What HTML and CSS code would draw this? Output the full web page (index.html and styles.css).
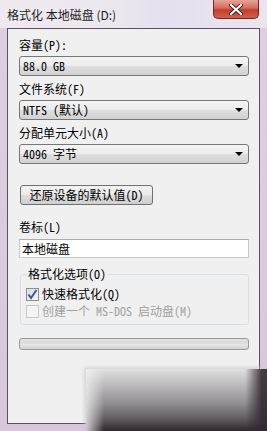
FILE: index.html
```html
<!DOCTYPE html>
<html lang="zh-CN">
<head>
    <meta charset="UTF-8">
    <title>格式化 本地磁盘 (D:)</title>
    <link rel="stylesheet" href="styles.css">
</head>
<body>
    <div class="window">
        <!-- Title Bar -->
        <div class="titlebar">
            <span class="title">格式化 本地磁盘 (D:)</span>
            <div class="close">
                <svg width="14" height="11" viewBox="0 0 14 11">
                    <path d="M2 1 L12 10 M12 1 L2 10" stroke="#4a1c18" stroke-width="4" stroke-linecap="round"/>
                    <path d="M2 1 L12 10 M12 1 L2 10" stroke="#ffffff" stroke-width="2.2" stroke-linecap="round"/>
                </svg>
            </div>
        </div>

        <!-- Dialog Body -->
        <div class="client">
            <div class="field">
                <div class="label">容量(P):</div>
                <div class="combo"><span>88.0 GB</span><i class="arrow"></i></div>
            </div>
            <div class="field">
                <div class="label">文件系统(F)</div>
                <div class="combo"><span>NTFS (默认)</span><i class="arrow"></i></div>
            </div>
            <div class="field">
                <div class="label">分配单元大小(A)</div>
                <div class="combo"><span>4096 字节</span><i class="arrow"></i></div>
            </div>

            <div class="restore">还原设备的默认值(D)</div>

            <div class="label volume-label">卷标(L)</div>
            <div class="textbox">本地磁盘</div>

            <fieldset class="options">
                <legend>格式化选项(O)</legend>
                <div class="check">
                    <span class="box">
                        <svg width="11" height="11" viewBox="0 0 11 11">
                            <path d="M1.5 5.5 L4 9 L9.5 1" fill="none" stroke="#3c5a9a" stroke-width="2"/>
                        </svg>
                    </span>
                    快速格式化(Q)
                </div>
                <div class="check disabled">
                    <span class="box"></span>
                    创建一个 MS-DOS 启动盘(M)
                </div>
            </fieldset>

            <div class="progress"></div>
        </div>

        <!-- Blurred corner over the buttons -->
        <div class="smudge"></div>
    </div>
</body>
</html>
```

FILE: styles.css
```css
/* General Styles */
body {
    margin: 0;
    background-color: #d9c9dc;
    font-family: "Noto Sans Mono CJK SC", "Noto Sans CJK SC", sans-serif;
    font-size: 12px;
    color: #000;
}

.window {
    position: relative;
    width: 267px;
    height: 431px;
    overflow: hidden;
    background: linear-gradient(180deg, #e9e1ea 0px, #ddcfe0 28px, #d8c7db 100%);
}

/* Title Bar */
.titlebar {
    height: 28px;
    display: flex;
    justify-content: space-between;
    align-items: flex-start;
    background: linear-gradient(90deg, #efeaf0 0%, #ece6ee 45%, #e4e0ee 60%, #ebe4ec 100%);
}

.title {
    margin: 8px 0 0 7px;
    font-family: "Noto Sans CJK SC", sans-serif;
    font-size: 12px;
    line-height: 14px;
    color: #1c1c1c;
}

.close {
    width: 46px;
    height: 19px;
    margin-right: 8px;
    display: flex;
    justify-content: center;
    align-items: center;
    box-sizing: border-box;
    border: 1px solid #6e2a24;
    border-top: none;
    border-radius: 0 0 5px 5px;
    background: linear-gradient(180deg, #e8a497 0%, #d56a5c 45%, #c23d2c 55%, #d2604c 100%);
}

/* Client Area */
.client {
    margin-left: 7px;
    width: 253px;
    height: 396px;
    box-sizing: border-box;
    border: 1px solid #5e5062;
    background-color: #f0f0f0;
    padding: 9px 10px 0 11px;
}

.label {
    height: 14px;
    line-height: 14px;
    margin-bottom: 4px;
}

.field {
    margin-bottom: 6px;
}

.combo {
    height: 20px;
    box-sizing: border-box;
    border: 1px solid #767676;
    border-radius: 3px;
    padding: 0 5px 0 3px;
    display: flex;
    justify-content: space-between;
    align-items: center;
    background: linear-gradient(180deg, #f4f4f4 0%, #ececec 48%, #dfdfdf 52%, #d2d2d2 100%);
}

.combo span {
    line-height: 14px;
}

.arrow {
    width: 0;
    height: 0;
    border-left: 4px solid transparent;
    border-right: 4px solid transparent;
    border-top: 4px solid #000;
}

.restore {
    width: 133px;
    height: 20px;
    margin: 21px 0 0 1px;
    box-sizing: border-box;
    border: 1px solid #707070;
    border-radius: 3px;
    text-align: center;
    line-height: 18px;
    background: linear-gradient(180deg, #f2f2f2 0%, #ebebeb 48%, #dddddd 52%, #cfcfcf 100%);
}

.volume-label {
    margin-top: 15px;
    margin-bottom: 5px;
}

.textbox {
    height: 19px;
    box-sizing: border-box;
    border: 1px solid #c6c9ce;
    border-top-color: #a9acb2;
    background-color: #fff;
    padding-left: 2px;
    line-height: 17px;
}

/* Group Box */
.options {
    margin: 9px 0 0 1px;
    width: 229px;
    box-sizing: border-box;
    border: 1px solid #d5dfe5;
    border-radius: 3px;
    padding: 6px 5px 6px 5px;
}

.options legend {
    margin-left: 1px;
    padding: 0 1px;
    line-height: 14px;
}

.check {
    height: 14px;
    line-height: 14px;
    display: flex;
    align-items: center;
    gap: 3px;
}

.check + .check {
    margin-top: 3px;
}

.box {
    width: 13px;
    height: 13px;
    box-sizing: border-box;
    border: 1px solid #8e8f8f;
    background: linear-gradient(135deg, #dcdcdc 0%, #f6f6f6 100%);
    display: flex;
    justify-content: center;
    align-items: center;
}

.check.disabled {
    color: #a0a0a0;
}

.check.disabled .box {
    border-color: #c8c8c8;
    background: #f4f4f4;
}

/* Progress Bar */
.progress {
    margin-top: 13px;
    height: 12px;
    box-sizing: border-box;
    border: 1px solid #9a9a9a;
    border-radius: 3px;
    background: linear-gradient(180deg, #e2e2e2 0%, #dadada 40%, #e6e6e6 55%, #d2d2d2 100%);
}

/* Dark patch at the bottom right */
.smudge {
    position: absolute;
    left: 86px;
    top: 369px;
    right: 0;
    bottom: 0;
    background-color: #8a868a;
    background-image:
        linear-gradient(90deg, rgba(240, 240, 240, 0.8) 0%, rgba(240, 240, 240, 0) 10%, rgba(40, 32, 40, 0) 88%, rgba(50, 42, 50, 0.9) 97%),
        linear-gradient(180deg, #e0e0e0 0%, #bdbbbd 25%, #938f93 55%, #625c62 80%, #2e262c 100%);
    box-shadow: 0 0 3px 2px rgba(200, 198, 200, 0.6);
}
```
